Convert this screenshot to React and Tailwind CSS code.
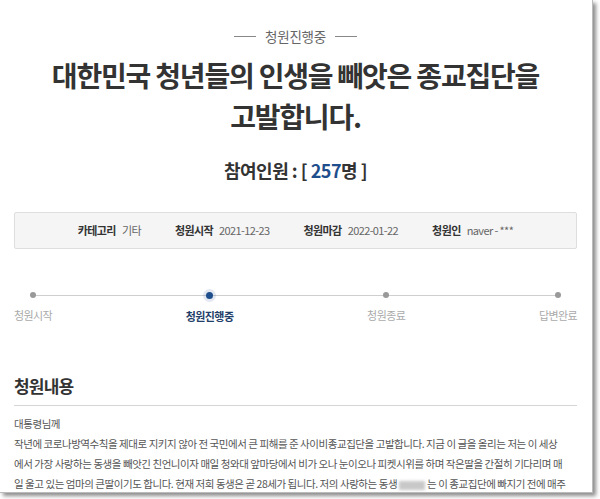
import React from "react";

const font = { fontFamily: '"Noto Sans CJK KR", "Noto Sans", sans-serif' };

const steps = [
  { label: "청원시작", active: false },
  { label: "청원진행중", active: true },
  { label: "청원종료", active: false },
  { label: "답변완료", active: false },
];

const InfoItem = ({ name, value }) => (
  <div className="flex items-center gap-[6px]">
    <span className="font-bold text-[#333]">{name}</span>
    <span className="text-[#666]">{value}</span>
  </div>
);

const App = () => {
  return (
    <div className="w-[600px] h-[499px] bg-white overflow-hidden" style={font}>
      <div className="w-[593px] h-[493px] bg-white border-r border-b border-[#bbb] shadow-[3px_3px_4px_rgba(0,0,0,0.45)] overflow-hidden">
        <div className="px-[14px] pt-[26px] w-[591px]">
          {/* status */}
          <div className="flex items-center justify-center gap-[9px] text-[13.5px] text-[#666] leading-[20px] tracking-[-0.2px]">
            <span className="w-[22px] h-px bg-[#888]" />
            <span>청원진행중</span>
            <span className="w-[22px] h-px bg-[#888]" />
          </div>

          {/* title */}
          <h1 className="mt-[9px] text-center text-[28px] font-bold text-[#333] leading-[41px] tracking-[-1.2px]">
            대한민국 청년들의 인생을 빼앗은 종교집단을
            <br />
            고발합니다.
          </h1>

          {/* count */}
          <div className="mt-[21px] text-center text-[18px] font-bold text-[#333] leading-[24px] tracking-[-0.5px]">
            참여인원 : [ <span className="text-[#1f4e8c]">257</span>명 ]
          </div>

          {/* info box */}
          <div className="mt-[30px] h-[37px] rounded-[2px] border border-[#dedede] bg-[#f5f5f5] flex items-center justify-center gap-[34px] text-[11px] tracking-[-0.6px]">
            <InfoItem name="카테고리" value="기타" />
            <InfoItem name="청원시작" value="2021-12-23" />
            <InfoItem name="청원마감" value="2022-01-22" />
            <InfoItem name="청원인" value="naver - ***" />
          </div>

          {/* progress */}
          <div className="mt-[46px]">
            <div className="mx-[19px] mt-[3px] h-px bg-[#cfcfcf]" />
            <div className="flex justify-between -mt-[4px]">
              {steps.map((s) => (
                <div key={s.label} className="flex flex-col items-center">
                  {s.active ? (
                    <span className="block w-[7px] h-[7px] -mt-[0.5px] rounded-full bg-[#1f4e8c] shadow-[0_0_0_3px_rgba(31,78,140,0.12)]" />
                  ) : (
                    <span className="block w-[6px] h-[6px] rounded-full bg-[#999]" />
                  )}
                  <span
                    className={
                      s.active
                        ? "mt-[9px] text-[11px] font-bold text-[#1f3f6a] tracking-[-0.6px]"
                        : "mt-[9px] text-[11px] text-[#aaa] tracking-[-0.6px]"
                    }
                  >
                    {s.label}
                  </span>
                </div>
              ))}
            </div>
          </div>

          {/* content */}
          <h2 className="mt-[50px] text-[17px] font-bold text-[#333] leading-[24px] tracking-[-0.8px]">
            청원내용
          </h2>
          <div className="mt-[7px] h-px bg-[#d5d5d5]" />
          <div className="mt-[8px] text-[10.5px] text-[#555] leading-[20px] tracking-[-0.45px] whitespace-nowrap">
            <div>대통령님께</div>
            <div>
              작년에 코로나방역수칙을 제대로 지키지 않아 전 국민에서 큰 피해를 준 사이비종교집단을 고발합니다. 지금 이 글을 올리는 저는 이 세상
            </div>
            <div>
              에서 가장 사랑하는 동생을 빼앗긴 친언니이자 매일 청와대 앞마당에서 비가 오나 눈이오나 피켓시위를 하며 작은딸을 간절히 기다리며 매
            </div>
            <div>
              일 울고 있는 엄마의 큰딸이기도 합니다. 현재 저희 동생은 곧 28세가 됩니다. 저의 사랑하는 동생
              <span className="inline-block align-middle w-[26px] h-[9px] mx-[2px] bg-[#c8c8c8] blur-[1.5px]" />
              는 이 종교집단에 빠지기 전에 매주
            </div>
          </div>
        </div>
      </div>
    </div>
  );
};

export default App;
